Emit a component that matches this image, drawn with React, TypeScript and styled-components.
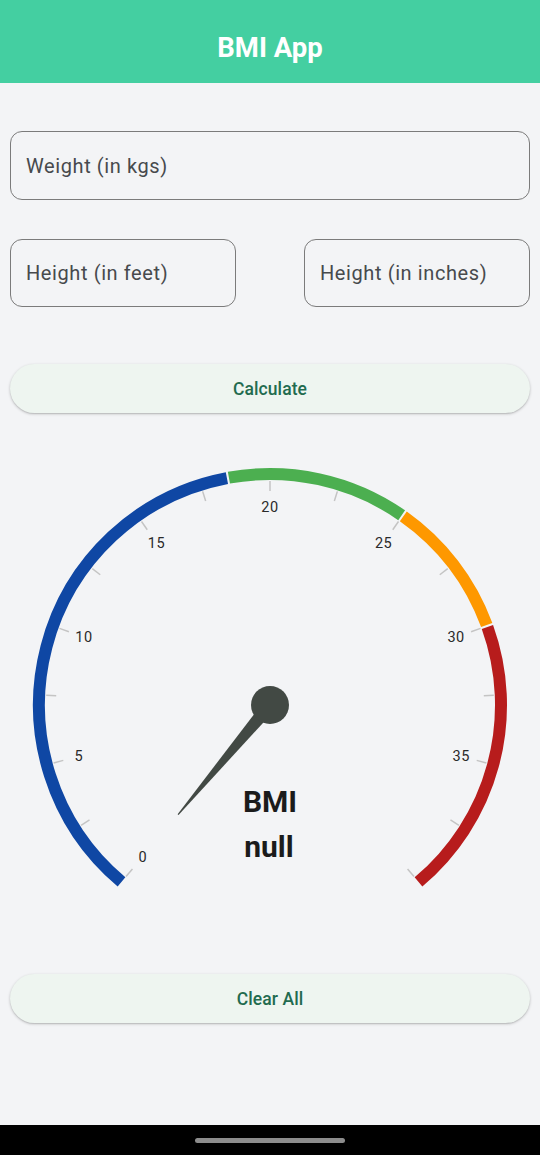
import React from "react";
import styled, { createGlobalStyle } from "styled-components";

const Global = createGlobalStyle`
  html, body { margin: 0; padding: 0; background: #f3f4f6; }
  body { font-family: Roboto, "Noto Sans", Arial, sans-serif; }
  * { box-sizing: border-box; }
`;

const Page = styled.div`
  min-height: 100vh;
  display: flex;
  flex-direction: column;
  background: #f3f4f6;
`;

const Header = styled.header`
  height: 83px;
  padding-top: 11px;
  background: #44cfa1;
  display: flex;
  align-items: center;
  justify-content: center;
  color: #ffffff;
  font-size: 27.5px;
  font-weight: 700;
`;

const Main = styled.main`
  padding: 48px 10px 0;
  display: flex;
  flex-direction: column;
`;

const Field = styled.div<{ $h: number }>`
  height: ${(p) => p.$h}px;
  border: 1px solid #7b7b7b;
  border-radius: 12px;
  display: flex;
  align-items: center;
  padding-left: 15px;
  font-size: 20px;
  letter-spacing: 0.6px;
  color: #474a4d;
`;

const FieldRow = styled.div`
  display: grid;
  grid-template-columns: 226px 226px;
  justify-content: space-between;
  margin-top: 39px;
`;

const PillButton = styled.button<{ $mt: number }>`
  margin-top: ${(p) => p.$mt}px;
  height: 49px;
  width: 100%;
  border: none;
  border-radius: 25px;
  background: #eef5f0;
  box-shadow: 0 1px 3px rgba(0, 0, 0, 0.22), 0 1px 1px rgba(0, 0, 0, 0.08);
  color: #226b4f;
  font-family: Roboto, Arial, sans-serif;
  font-size: 17.5px;
  font-weight: 500;
  letter-spacing: 0.1px;
`;

const GaugeSvg = styled.svg`
  display: block;
  margin-top: 22px;
  width: 520px;
  height: 500px;
`;

const NavBar = styled.div`
  margin-top: auto;
  height: 30px;
  background: #000;
  display: flex;
  align-items: center;
  justify-content: center;
`;

const HomePill = styled.div`
  width: 150px;
  height: 5px;
  border-radius: 3px;
  background: #8c8c8c;
`;

const CX = 260;
const CY = 270;
const R = 231;

const ang = (v: number) => 130 + v * 7;
const pt = (a: number, r: number) => {
  const rad = (a * Math.PI) / 180;
  return [CX + r * Math.cos(rad), CY + r * Math.sin(rad)];
};
const arc = (v1: number, v2: number, gap1: number, gap2: number) => {
  const a1 = ang(v1) + gap1;
  const a2 = ang(v2) - gap2;
  const [x1, y1] = pt(a1, R);
  const [x2, y2] = pt(a2, R);
  const large = a2 - a1 > 180 ? 1 : 0;
  return `M ${x1} ${y1} A ${R} ${R} 0 ${large} 1 ${x2} ${y2}`;
};

const ranges = [
  { from: 0, to: 18.5, color: "#0f47a4" },
  { from: 18.5, to: 25, color: "#4caf50" },
  { from: 25, to: 30, color: "#fe9800" },
  { from: 30, to: 40, color: "#b71c1c" },
];

const Gauge: React.FC = () => {
  const ticks: number[] = [];
  for (let v = 0; v <= 40; v += 2.5) ticks.push(v);
  const labels = [0, 5, 10, 15, 20, 25, 30, 35];
  return (
    <GaugeSvg viewBox="0 0 520 500">
      {ranges.map((r, i) => (
        <path
          key={i}
          d={arc(r.from, r.to, i === 0 ? 0 : 0.25, i === ranges.length - 1 ? 0 : 0.25)}
          stroke={r.color}
          strokeWidth={12}
          fill="none"
        />
      ))}
      {ticks.map((v) => {
        const a = ang(v);
        const [x1, y1] = pt(a, 214);
        const [x2, y2] = pt(a, 224);
        return (
          <line key={v} x1={x1} y1={y1} x2={x2} y2={y2} stroke="#c4c4c4" strokeWidth={1.5} />
        );
      })}
      {labels.map((v) => {
        const [x, y] = pt(ang(v), 198);
        return (
          <text
            key={v}
            x={x}
            y={y + 5}
            textAnchor="middle"
            fontSize={14.5}
            letterSpacing={0.5}
            fill="#2a2a2a"
            fontFamily="Roboto, Arial, sans-serif"
          >
            {v}
          </text>
        );
      })}
      <g transform={`translate(${CX} ${CY}) rotate(130)`}>
        <polygon points="0,-7 143,-0.6 143,0.6 0,7" fill="#424944" />
      </g>
      <circle cx={CX} cy={CY} r={19} fill="#424944" />
      <text
        x={CX}
        y={377}
        textAnchor="middle"
        fontSize={30}
        fontWeight={700}
        fill="#1b1b1b"
        fontFamily="Roboto, Arial, sans-serif"
      >
        BMI
      </text>
      <text
        x={CX - 1}
        y={422}
        textAnchor="middle"
        fontSize={30}
        fontWeight={700}
        fill="#1b1b1b"
        fontFamily="Roboto, Arial, sans-serif"
      >
        null
      </text>
    </GaugeSvg>
  );
};

export default function App() {
  return (
    <>
      <Global />
      <Page>
        <Header>BMI App</Header>
        <Main>
          <Field $h={69}>Weight (in kgs)</Field>
          <FieldRow>
            <Field $h={68}>Height (in feet)</Field>
            <Field $h={68}>Height (in inches)</Field>
          </FieldRow>
          <PillButton $mt={57}>Calculate</PillButton>
          <Gauge />
          <PillButton $mt={39}>Clear All</PillButton>
        </Main>
        <NavBar>
          <HomePill />
        </NavBar>
      </Page>
    </>
  );
}
